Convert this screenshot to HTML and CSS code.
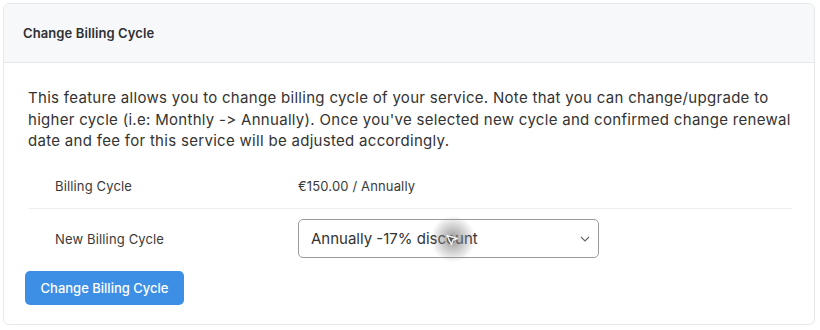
FILE: index.html
```html
<!DOCTYPE html>
<html>
<head>
<meta charset="utf-8">
<link rel="stylesheet" href="styles.css">
</head>
<body>
<div class="card">
  <div class="card-header">Change Billing Cycle</div>
  <div class="card-body">
    <p class="intro">This feature allows you to change billing cycle of your service. Note that you can change/upgrade to higher cycle (i.e: Monthly -&gt; Annually). Once you've selected new cycle and confirmed change renewal date and fee for this service will be adjusted accordingly.</p>
    <div class="table">
      <div class="row">
        <div class="label">Billing Cycle</div>
        <div class="value">€150.00 / Annually</div>
      </div>
      <div class="row last">
        <div class="label">New Billing Cycle</div>
        <div class="value">
          <div class="select">
            <span>Annually -17% discount</span>
            <svg class="chev" width="10" height="6" viewBox="0 0 10 6"><path d="M1 1l4 4 4-4" fill="none" stroke="#666" stroke-width="1.1"/></svg>
            <div class="cursor-halo"></div>
            <svg class="cursor" width="14" height="14" viewBox="0 0 14 14"><path d="M2 3.5L12.5 6.5L8 8L6.5 12.5Z" fill="#555" stroke="#f2f2f2" stroke-width="1.4" stroke-linejoin="round"/></svg>
          </div>
        </div>
      </div>
    </div>
    <button class="btn">Change Billing Cycle</button>
  </div>
</div>
</body>
</html>
```
FILE: styles.css
```css
* { box-sizing: border-box; }
html, body { margin: 0; padding: 0; background: #fff; }
body { padding: 3px 5px 0 3px; font-family: Inter, "Noto Sans", sans-serif; color: #333; }
.card {
  border: 1px solid #e6e8eb;
  border-radius: 6px;
  overflow: hidden;
  height: 322px;
}
.card-header {
  background: #f7f8fa;
  border-bottom: 1px solid #e6e8eb;
  height: 59px;
  padding: 0 0 0 19px;
  display: flex;
  align-items: center;
  font-size: 13px;
  font-weight: 600;
  letter-spacing: 0.1px;
  color: #2f3033;
}
.card-body { padding: 24px 22px 0 24px; }
.intro {
  margin: 0;
  font-size: 15px;
  line-height: 21.5px;
  color: #333;
  letter-spacing: 0.3px;
}
.table { margin: 13px 0 0 1px; }
.row {
  display: flex;
  align-items: center;
  border-bottom: 1px solid #eceef0;
  height: 44px;
  font-size: 13px;
  letter-spacing: 0.15px;
  color: #3a3a3a;
}
.row.last { border-bottom: none; height: 60px; }
.label { width: 270px; padding-left: 26px; }
.value { flex: 1; margin-left: -1px; }
.select {
  position: relative;
  width: 301px;
  height: 39px;
  border: 1px solid #9a9a9a;
  border-radius: 5px;
  display: flex;
  align-items: center;
  justify-content: space-between;
  padding: 0 8px 0 12px;
  font-size: 15px;
  letter-spacing: 0;
  color: #333;
}
.chev { margin-top: 1px; }
.cursor-halo {
  position: absolute;
  left: 132px;
  top: -4px;
  width: 44px;
  height: 46px;
  border-radius: 50%;
  background: radial-gradient(ellipse at center, rgba(110,110,110,0.7) 0%, rgba(140,140,140,0.4) 40%, rgba(200,200,200,0) 72%);
}
.cursor {
  position: absolute;
  left: 146px;
  top: 12px;
}
.btn {
  margin-top: 2px;
  margin-left: -3px;
  background: #3d8fe6;
  color: #fff;
  border: none;
  border-radius: 5px;
  width: 159px;
  height: 34px;
  font-family: Inter, sans-serif;
  font-size: 13px;
  font-weight: 500;
}
```
